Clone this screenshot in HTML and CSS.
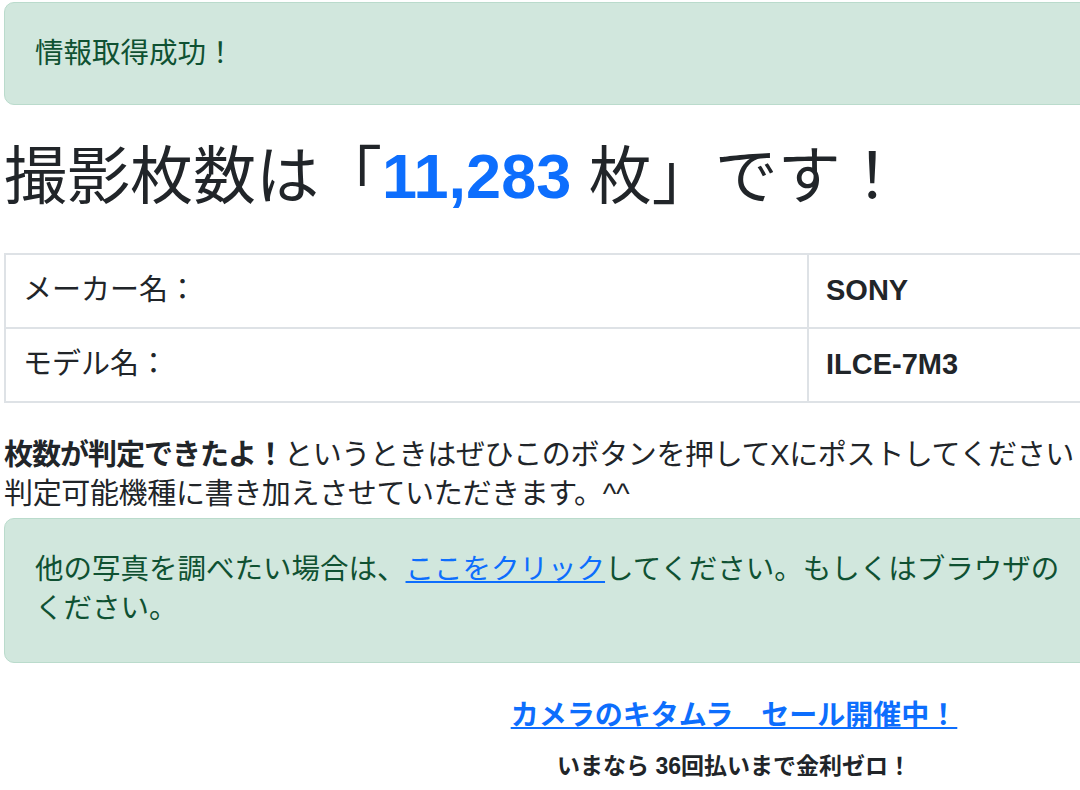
FILE: index.html
```html
<!DOCTYPE html>
<html lang="ja">
<head>
  <meta charset="UTF-8">
  <meta name="viewport" content="width=device-width, initial-scale=1.0">
  <title>撮影枚数チェック</title>
  <link rel="stylesheet" href="styles.css">
</head>
<body>
  <div class="page">
    <div class="alert">情報取得成功！</div>

    <h1 class="count-title">撮影枚数は「<span class="count">11,283</span> 枚」です！</h1>

    <table class="info-table">
      <tr>
        <td class="label">メーカー名：</td>
        <td class="value">SONY</td>
      </tr>
      <tr>
        <td class="label">モデル名：</td>
        <td class="value">ILCE-7M3</td>
      </tr>
    </table>

    <p class="note"><strong>枚数が判定できたよ！</strong>というときはぜひこのボタンを押してXにポストしてください<br>判定可能機種に書き加えさせていただきます。^^</p>

    <div class="alert alert-more">他の写真を調べたい場合は、<a href="#">ここをクリック</a>してください。もしくはブラウザの<br>ください。</div>

    <div class="promo">
      <a href="#" class="promo-link">カメラのキタムラ　セール開催中！</a>
      <p class="promo-sub">いまなら 36回払いまで金利ゼロ！</p>
    </div>
  </div>
</body>
</html>
```

FILE: styles.css
```css
* {
  margin: 0;
  padding: 0;
  box-sizing: border-box;
}

body {
  font-family: "Liberation Sans", "Noto Sans CJK JP", sans-serif;
  color: #212529;
  background: #fff;
  overflow: hidden;
}

.page {
  width: 1460px;
  margin-left: 4px;
  padding-top: 2px;
  font-size: 29px;
  line-height: 1.35;
}

.alert {
  padding: 31px 30px;
  font-size: 28.5px;
  line-height: 1.37;
  color: #0f5132;
  background-color: #d1e7dd;
  border: 1px solid #badbcc;
  border-radius: 10px;
}

.alert-more {
  padding: 31px 30px 34px;
}

.alert a {
  color: #0d6efd;
}

.count-title {
  margin: 34px 0 38px;
  font-size: 63px;
  font-weight: 400;
  line-height: 1.2;
}

.count {
  color: #0d6efd;
  font-weight: 700;
}

.info-table {
  width: 100%;
  border-collapse: collapse;
}

.info-table td {
  padding: 16.5px 17px;
  border: 2px solid #dee2e6;
}

.info-table .label {
  width: 803px;
}

.info-table .value {
  font-weight: 700;
}

.note {
  margin: 33px 0 4px;
  letter-spacing: -0.35px;
}

.note strong {
  letter-spacing: -1px;
}

.promo {
  margin-top: 33px;
  text-align: center;
}

.promo-link {
  color: #0d6efd;
  font-size: 28px;
  font-weight: 700;
}

.promo-sub {
  margin-top: 16px;
  font-size: 23px;
  font-weight: 700;
}
```
